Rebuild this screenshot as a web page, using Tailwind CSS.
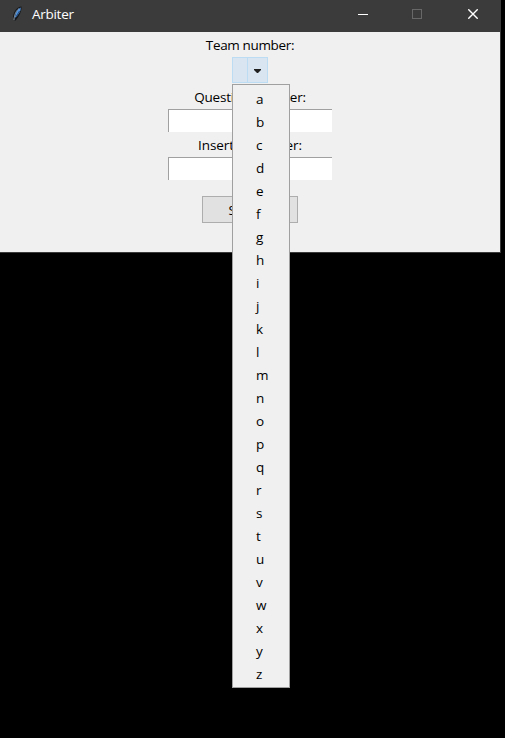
<!DOCTYPE html>
<html lang="en">
<head>
<meta charset="utf-8">
<title>Arbiter</title>
<script src="https://cdn.jsdelivr.net/npm/@tailwindcss/browser@4"></script>
</head>
<body class="bg-black w-[505px] h-[738px] overflow-hidden font-['Open_Sans','Noto_Sans',sans-serif] text-[13.5px] tracking-[-0.28px] leading-[18px] text-black">
<main class="w-[501px] h-[253px] border-r border-b border-[#3b3b3b] bg-[#f0f0f0]">
  <header class="h-8 w-[501px] bg-[#3b3b3b] text-white flex items-center">
    <svg class="ml-[11px] mb-1 w-[12px] h-[18px]" viewBox="0 0 12 18">
      <path d="M10.5 1.500C6 2 2.500 6 2 12L4 16C8 12 11 6 10.500 1.500Z" fill="#15181c"/>
      <path d="M9.800 2.500C6.500 4 4.700 7 3.800 13C7.800 9.500 10 6 9.800 2.500Z" fill="#4f91dc"/>
      <path d="M8 3.500C5 6 3.500 9 3 15" fill="none" stroke="#a4b4c5" stroke-width=".7"/>
      <path d="M8.500 6L5.500 11" stroke="#18375e" stroke-width=".8"/>
    </svg>
    <span class="ml-[9px] mb-[5px] w-[310px]">Arbiter</span>
    <svg class="ml-4 mb-[4px] w-[10px] h-[10px]" viewBox="0 0 10 10"><path d="M0 5.500H10" stroke="white"/></svg>
    <svg class="ml-[44px] mb-[4px] w-[10px] h-[10px]" viewBox="0 0 10 10"><rect x=".5" y=".5" width="9" height="9" fill="none" stroke="#686868"/></svg>
    <svg class="ml-[46px] mb-[4px] w-[10px] h-[10px]" viewBox="0 0 10 10"><path d="M.3.3L9.700 9.700M9.700.3L.3 9.700" stroke="white" stroke-width="1.400"/></svg>
  </header>
  <form class="w-[500px] flex flex-col items-center">
    <label class="mt-[4px] h-[21px] tracking-[-0.35px]">Team number:</label>
    <div class="relative w-9 h-[26px] border border-[#bcdcf4] bg-[#d9e6f1] flex">
      <div class="w-[15px] border-r border-[#bcdcf4]"></div>
      <svg class="ml-[6px] mt-[11px] w-[7px] h-[4px]" viewBox="0 0 7 4"><path d="M0 0H7V1L4 4H3L0 1Z" fill="#202020"/></svg>
      <div id="menu" class="absolute left-[-1px] top-[26px] z-10 w-[58px] h-[604px] border border-[#a0a0a0] bg-[#f0f0f0] pl-[23px] pt-[3px]"></div>
    </div>
    <label class="mt-[5px] h-[21px] tracking-[-0.2px]">Question number:</label>
    <div class="w-[164px] h-[23px] border-t border-l border-[#a0a0a0] bg-white"></div>
    <label class="mt-[4px] h-[21px] tracking-[-0.05px]">Insert a number:</label>
    <div class="w-[164px] h-[23px] border-t border-l border-[#a0a0a0] bg-white"></div>
    <button type="button" class="mt-4 w-24 h-[27px] border border-[#adadad] bg-[#e1e1e1]">Submit</button>
  </form>
</main>
<script>
for (const letter of 'abcdefghijklmnopqrstuvwxyz') {
  const row = document.createElement('div');
  row.className = 'h-[23px] leading-[22px]';
  row.textContent = letter;
  document.getElementById('menu').append(row);
}
</script>
</body>
</html>
